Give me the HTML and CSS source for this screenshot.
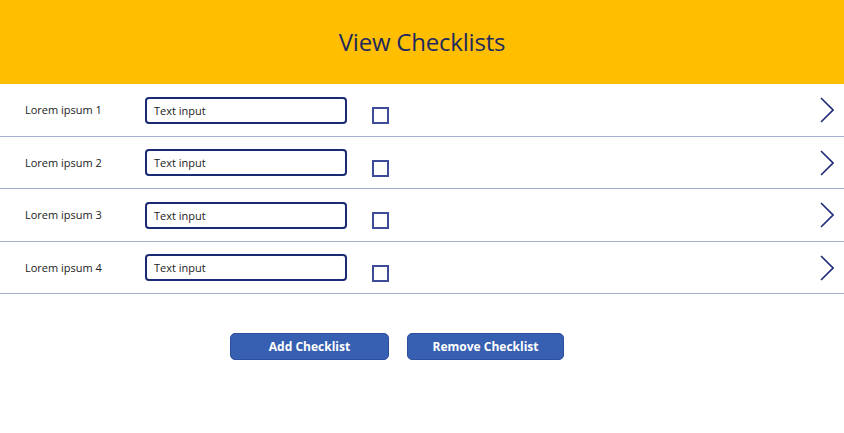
FILE: index.html
```html
<!DOCTYPE html>
<html>
<head>
<meta charset="utf-8">
<link rel="stylesheet" href="styles.css">
</head>
<body>
<header class="header"><h1 class="title">View Checklists</h1></header>
<main class="list">
  <div class="row">
    <span class="label">Lorem ipsum 1</span>
    <div class="input">Text input</div>
    <span class="check"></span>
    <svg class="chev" viewBox="0 0 14 26" width="14" height="26"><path d="M1 1 L13 13 L1 25" fill="none" stroke="#1f2a78" stroke-width="1.6"/></svg>
  </div>
  <div class="row">
    <span class="label">Lorem ipsum 2</span>
    <div class="input">Text input</div>
    <span class="check"></span>
    <svg class="chev" viewBox="0 0 14 26" width="14" height="26"><path d="M1 1 L13 13 L1 25" fill="none" stroke="#1f2a78" stroke-width="1.6"/></svg>
  </div>
  <div class="row">
    <span class="label">Lorem ipsum 3</span>
    <div class="input">Text input</div>
    <span class="check"></span>
    <svg class="chev" viewBox="0 0 14 26" width="14" height="26"><path d="M1 1 L13 13 L1 25" fill="none" stroke="#1f2a78" stroke-width="1.6"/></svg>
  </div>
  <div class="row">
    <span class="label">Lorem ipsum 4</span>
    <div class="input">Text input</div>
    <span class="check"></span>
    <svg class="chev" viewBox="0 0 14 26" width="14" height="26"><path d="M1 1 L13 13 L1 25" fill="none" stroke="#1f2a78" stroke-width="1.6"/></svg>
  </div>
</main>
<div class="actions">
  <button class="btn btn-add">Add Checklist</button>
  <button class="btn btn-remove">Remove Checklist</button>
</div>
</body>
</html>
```
FILE: styles.css
```css
* { box-sizing: border-box; }
html, body { margin: 0; padding: 0; background: #ffffff; }
body {
  font-family: "Open Sans", "Noto Sans", sans-serif;
  width: 844px;
  height: 433px;
  overflow: hidden;
}
.header {
  height: 84px;
  background: #ffbf00;
  display: flex;
  align-items: center;
  justify-content: center;
}
.title {
  margin: 0 0 2px 0;
  font-weight: 400;
  font-size: 24px;
  color: #1f2a5e;
  letter-spacing: -0.2px;
}
.list { display: flex; flex-direction: column; }
.row {
  height: 52.5px;
  border-bottom: 1px solid #a7b0d0;
  display: flex;
  align-items: center;
}
.label {
  width: 145px;
  padding-left: 25px;
  font-size: 11px;
  color: #222;
}
.input {
  width: 202px;
  height: 27px;
  border: 2px solid #1b2a74;
  border-radius: 4px;
  font-size: 11px;
  color: #222;
  padding-left: 7px;
  display: flex;
  align-items: center;
  margin-top: 1px;
}
.check {
  width: 17px;
  height: 17px;
  border: 2px solid #3d4b98;
  margin-left: 25px;
  margin-top: 12px;
}
.chev {
  margin-left: auto;
  margin-right: 10px;
  margin-top: 1px;
}
.actions {
  display: flex;
  gap: 18px;
  padding-left: 230px;
  padding-top: 39px;
}
.btn {
  height: 27px;
  border: 1px solid #2c4f9e;
  border-radius: 5px;
  background: #3860b2;
  color: #ffffff;
  font-family: "Open Sans", "Noto Sans", sans-serif;
  font-weight: 700;
  font-size: 12px;
  padding: 0;
}
.btn-add { width: 159px; }
.btn-remove { width: 157px; }
```
